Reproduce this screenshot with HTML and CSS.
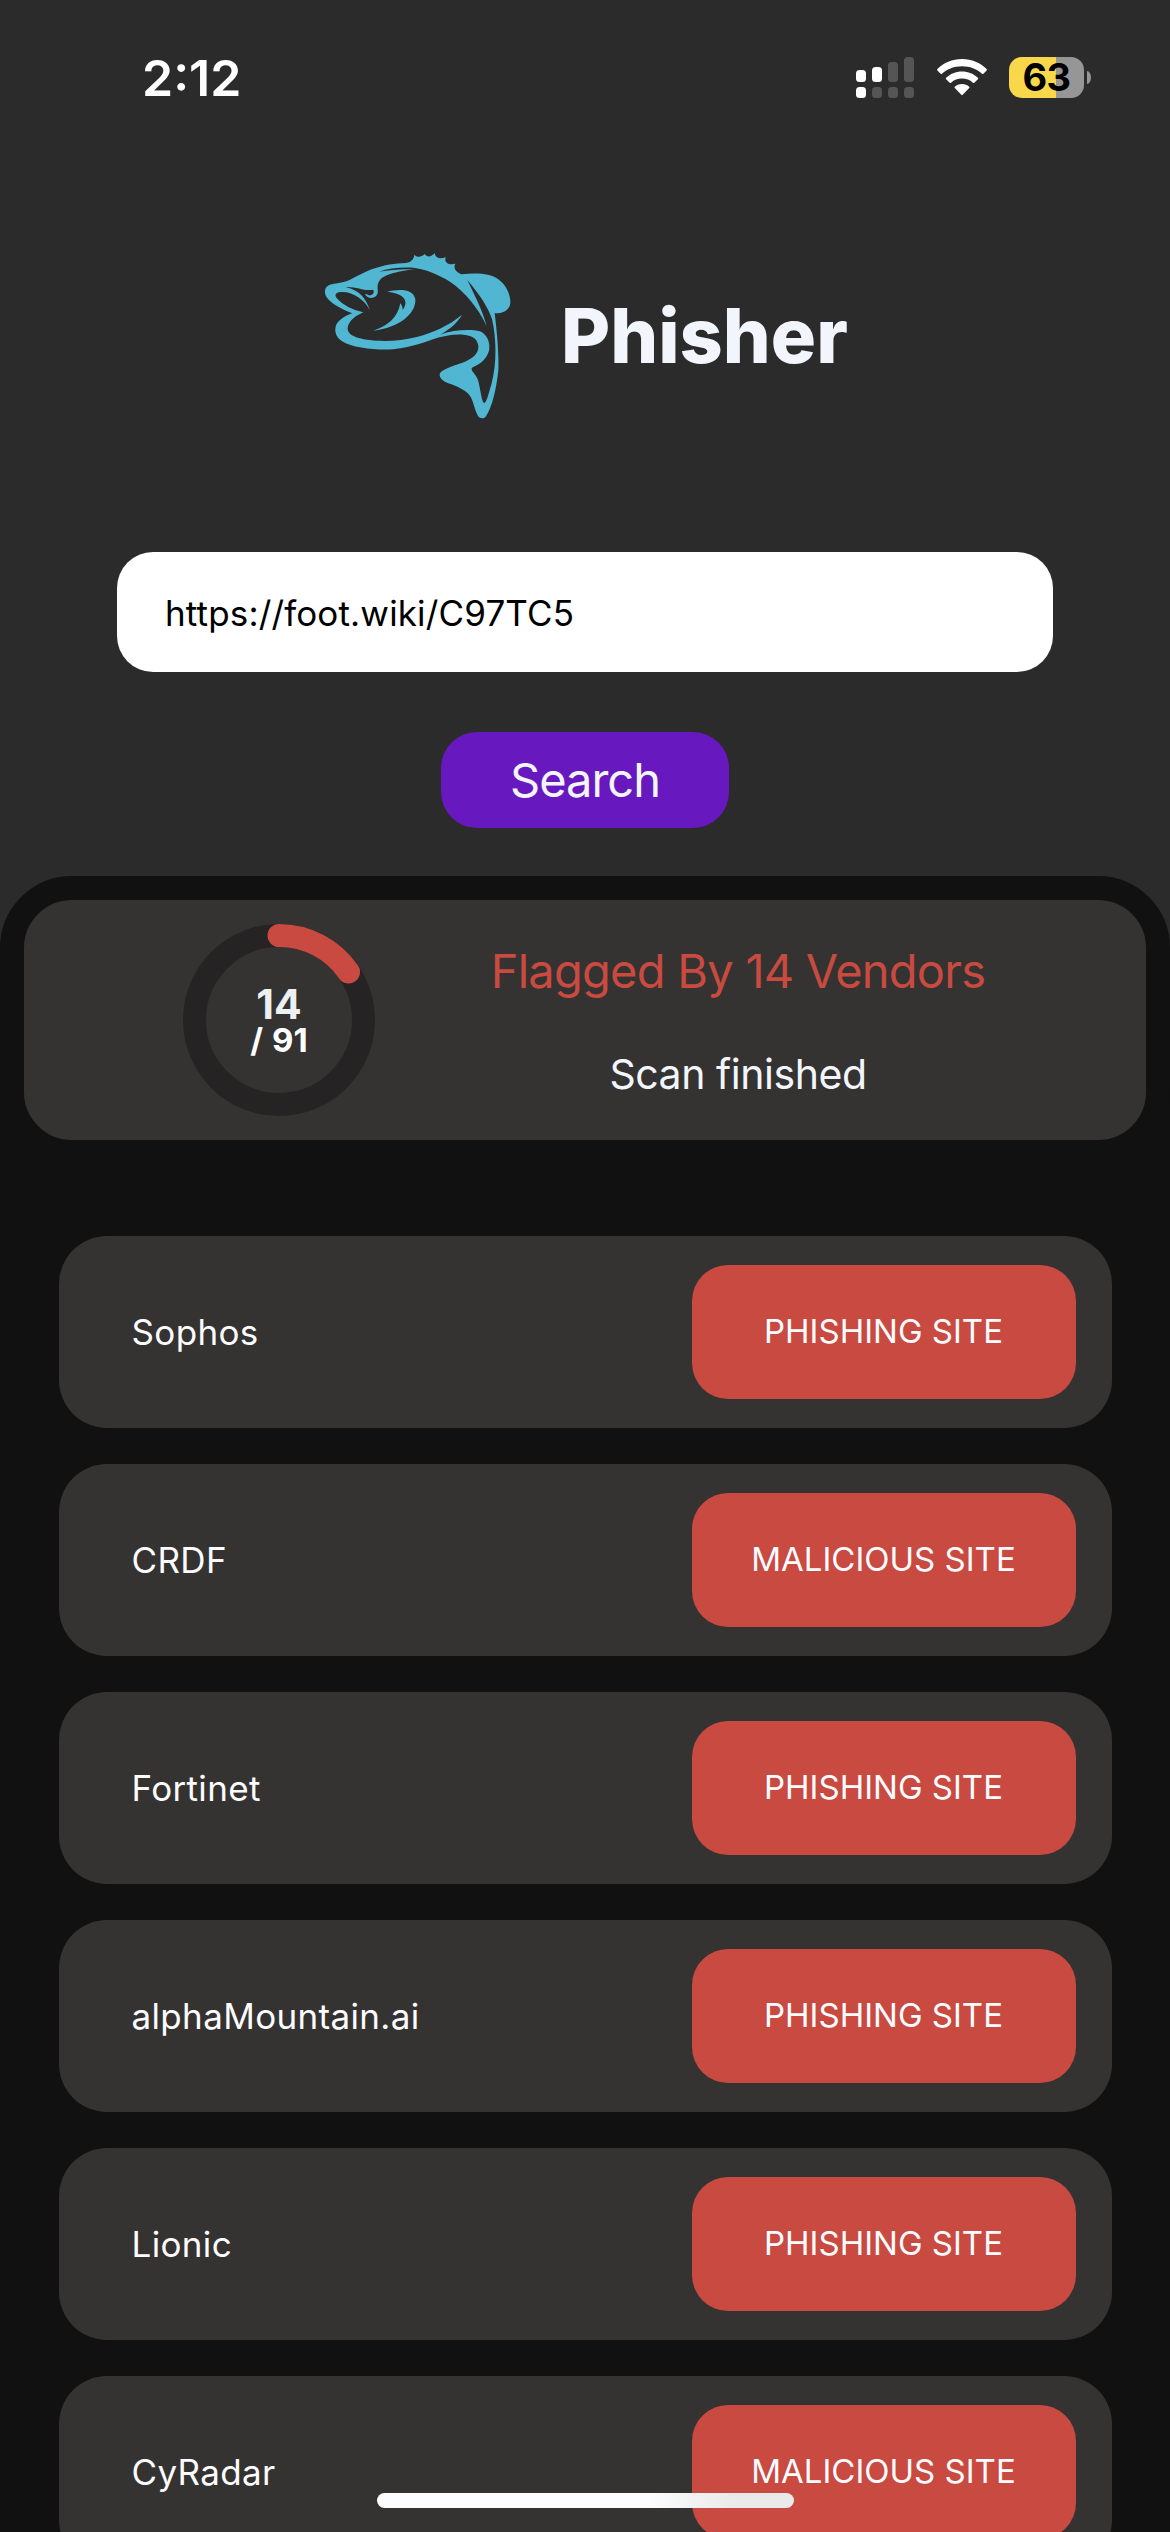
FILE: index.html
```html
<!DOCTYPE html>
<html lang="en">
<head>
<meta charset="utf-8">
<title>Phisher</title>
<link rel="stylesheet" href="styles.css">
</head>
<body>
<div class="screen">
  <header class="status">
    <span class="time">2:12</span>
    <div class="status-icons">
      <svg class="signal" viewBox="0 0 58 41" width="58" height="41">
        <g fill="#fff"><rect y="13" width="10" height="12" rx="3.5"/><rect x="16" y="10" width="10" height="15" rx="3.5"/><rect y="30" width="10" height="11" rx="3.5"/></g>
        <g fill="#555"><rect x="32" y="5" width="10" height="20" rx="3.5"/><rect x="48" width="10" height="25" rx="3.5"/><rect x="16" y="30" width="10" height="11" rx="3.5"/><rect x="32" y="30" width="10" height="11" rx="3.5"/><rect x="48" y="30" width="10" height="11" rx="3.5"/></g>
      </svg>
      <svg class="wifi" viewBox="0 0 50 37" width="50" height="37" fill="#fff">
        <path d="M25 0C34.700 0 43.300 3.800 49.600 9.900Q50.300 10.700 49.600 11.400L46.400 14.700Q45.700 15.300 45 14.700C39.700 9.900 32.800 7.200 25 7.200S10.300 9.900 5 14.700Q4.300 15.300 3.600 14.700L.4 11.400Q-.3 10.700 .4 9.900C6.700 3.800 15.300 0 25 0Z"/>
        <path d="M25 12.500C31.300 12.500 36.800 14.900 40.900 18.800Q41.600 19.500 40.900 20.200L37.300 23.700Q36.600 24.300 35.900 23.700C33 21.100 29.200 19.600 25 19.600S17 21.100 14.100 23.700Q13.400 24.300 12.700 23.700L9.100 20.200Q8.400 19.500 9.100 18.800C13.200 14.900 18.700 12.500 25 12.500Z"/>
        <path d="M25 25C28 25 30.300 26 32.200 27.700Q32.900 28.400 32.200 29.100L25.700 35.800Q25 36.500 24.300 35.800L17.800 29.100Q17.100 28.400 17.800 27.700C19.700 26 22 25 25 25Z"/>
      </svg>
      <div class="battery"><span class="level">63</span><span class="nub"></span></div>
    </div>
  </header>

  <div class="brand">
    <svg class="fish" viewBox="0 0 660 570" width="220" height="190">
      <path fill="#50b6d1" fill-rule="evenodd" d="M45 152C48 132 68 133 85 129C120 126 140 105 185 88C225 74 255 70 288 69C305 66 312 56 313 44C320 52 333 53 344 42C352 54 365 50 374 39C376 55 392 59 407 51C402 68 416 76 436 71C428 86 440 98 455 103C500 98 540 100 565 118C590 137 602 165 601 190C598 213 575 221 554 220C560 270 567 330 565 390C560 440 548 500 527 530C520 537 510 536 504 528C492 505 490 480 478 465C465 450 440 438 415 430C395 422 386 410 390 400C398 385 440 375 465 365C490 353 506 340 505 318C503 298 490 287 460 284C430 282 405 288 388 292C350 303 310 322 250 328C200 331 130 325 95 303C75 290 72 268 80 252C90 236 110 226 127 220C95 208 62 190 50 172C46 165 44 158 45 152Z
      M160 217C125 232 112 252 113 268C116 292 160 302 225 303C290 303 350 285 390 266C415 253 435 242 456 224C445 245 420 268 390 284C430 270 480 267 510 274C535 286 541 312 537 332C528 362 505 374 486 383C480 392 498 402 504 420C512 450 515 488 523 489C530 488 536 460 545 430C560 370 560 300 546 237C536 205 510 165 472 120C498 175 515 205 530 258C505 205 465 155 420 125C385 103 345 87 310 83C270 81 235 85 207 95C240 90 275 86 316 88C270 92 222 104 210 120C198 135 205 148 203 160C198 178 172 178 165 162C172 160 174 167 182 166C190 164 194 156 189 149C165 155 140 139 107 141C150 152 168 175 180 212C165 180 130 155 95 156C78 156 72 165 80 174C100 197 130 210 160 217Z
      M232 155C260 148 310 142 316 178C318 220 270 262 190 272C235 256 262 235 271 190C276 196 278 203 278 210C292 190 295 163 232 155Z"/>
    </svg>
    <h1 class="name">Phisher</h1>
  </div>

  <div class="field">https://foot.wiki/C97TC5</div>
  <button class="search">Search</button>

  <section class="summary">
    <div class="gauge">
      <svg class="ring" viewBox="0 0 192 192" width="192" height="192" fill="none" stroke-width="23">
        <circle cx="96" cy="96" r="84.500" stroke="#252324"/>
        <path d="M96 11.500A84.500 84.500 0 0 1 165.550 48" stroke="#c84a40" stroke-linecap="round"/>
      </svg>
      <div class="count"><span class="hits">14</span><span class="total">/ 91</span></div>
    </div>
    <div class="verdict">
      <p class="flagged">Flagged By 14 Vendors</p>
      <p class="state">Scan finished</p>
    </div>
  </section>

  <ul class="vendors">
    <li class="vendor"><span class="vname">Sophos</span><span class="badge">PHISHING SITE</span></li>
    <li class="vendor"><span class="vname">CRDF</span><span class="badge">MALICIOUS SITE</span></li>
    <li class="vendor"><span class="vname">Fortinet</span><span class="badge">PHISHING SITE</span></li>
    <li class="vendor"><span class="vname">alphaMountain.ai</span><span class="badge">PHISHING SITE</span></li>
    <li class="vendor"><span class="vname">Lionic</span><span class="badge">PHISHING SITE</span></li>
    <li class="vendor"><span class="vname">CyRadar</span><span class="badge">MALICIOUS SITE</span></li>
  </ul>
  <div class="home"></div>
</div>
</body>
</html>
```
FILE: styles.css
```css
* { box-sizing: border-box; margin: 0; padding: 0; }
body { background: #111; font-family: Inter, "Liberation Sans", sans-serif; }
.screen {
  position: relative;
  width: 1170px;
  height: 2532px;
  overflow: hidden;
  display: flex;
  flex-direction: column;
  align-items: center;
  background: linear-gradient(#2b2b2b 1020px, #111 1020px);
}
.status {
  width: 100%;
  height: 156px;
  flex: none;
  display: flex;
  justify-content: space-between;
  padding: 0 79px 0 142px;
}
.time {
  color: #fff;
  font-size: 50px;
  font-weight: 600;
  line-height: 60px;
  padding-top: 48px;
}
.status-icons { display: flex; align-items: flex-start; padding-top: 57px; }
.wifi { margin: 2px 22.5px 0 22.5px; }
.battery { display: flex; align-items: center; gap: 3px; }
.level {
  width: 75px;
  height: 41px;
  border-radius: 13px;
  background: linear-gradient(90deg, #f8d74a 47px, #969696 47px);
  color: #000;
  font-size: 38px;
  font-weight: 700;
  letter-spacing: -0.5px;
  line-height: 41px;
  text-align: center;
}
.nub { width: 4px; height: 13px; border-radius: 0 4px 4px 0 / 0 6.5px 6.5px 0; background: #969696; }
.brand {
  width: 100%;
  height: 396px;
  flex: none;
  display: flex;
  padding: 84px 0 0 310px;
}
.name {
  color: #f2f5fb;
  font-size: 75.500px;
  font-weight: 800;
  line-height: 92px;
  margin: 50px 0 0 31px;
}
.field {
  width: 936px;
  height: 120px;
  flex: none;
  border-radius: 36px;
  background: #fff;
  color: #000;
  font-size: 35px;
  letter-spacing: 0.15px;
  line-height: 122px;
  padding-left: 48px;
}
.search {
  width: 288px;
  height: 96px;
  flex: none;
  margin-top: 60px;
  border: 0;
  border-radius: 36px;
  background: #6818bf;
  color: #f2f5fb;
  font-family: inherit;
  font-size: 47px;
  letter-spacing: -1px;
  line-height: 96px;
}
.summary {
  width: 1170px;
  height: 288px;
  flex: none;
  margin-top: 48px;
  border: 24px solid #111;
  border-radius: 72px;
  background: #343331;
  display: flex;
  align-items: center;
}
.gauge { display: grid; place-items: center; margin-left: 159px; }
.ring, .count { grid-area: 1 / 1; }
.count { display: flex; flex-direction: column; align-items: center; font-weight: 700; }
.hits { color: #ecf0f1; font-size: 41px; line-height: 40px; }
.total { color: #fff; font-size: 33px; line-height: 32px; word-spacing: 1px; }
.verdict {
  width: 654px;
  margin-left: 36px;
  text-align: center;
}
.flagged { color: #c84a40; font-size: 47px; letter-spacing: -0.75px; line-height: 58px; }
.state { color: #f2f5fb; font-size: 41px; letter-spacing: -0.45px; line-height: 50px; margin-top: 49px; }
.vendors {
  width: 1053px;
  flex: none;
  margin-top: 72px;
  list-style: none;
  display: flex;
  flex-direction: column;
  gap: 36px;
}
.vendor {
  height: 192px;
  border-radius: 48px;
  background: #343331;
  display: flex;
  align-items: center;
  justify-content: space-between;
  padding: 0 36px 0 73px;
}
.vname { color: #fcfcff; font-size: 35px; letter-spacing: 0.35px; }
.badge {
  width: 384px;
  height: 134px;
  border-radius: 36px;
  background: #c84a40;
  color: #fcfcff;
  font-size: 33px;
  line-height: 132px;
  text-align: center;
}
.home {
  position: absolute;
  left: 377px;
  bottom: 24px;
  width: 417px;
  height: 15px;
  border-radius: 8px;
  background: linear-gradient(90deg, #fdfdfd 65%, #eaeaea 85%);
}
```
